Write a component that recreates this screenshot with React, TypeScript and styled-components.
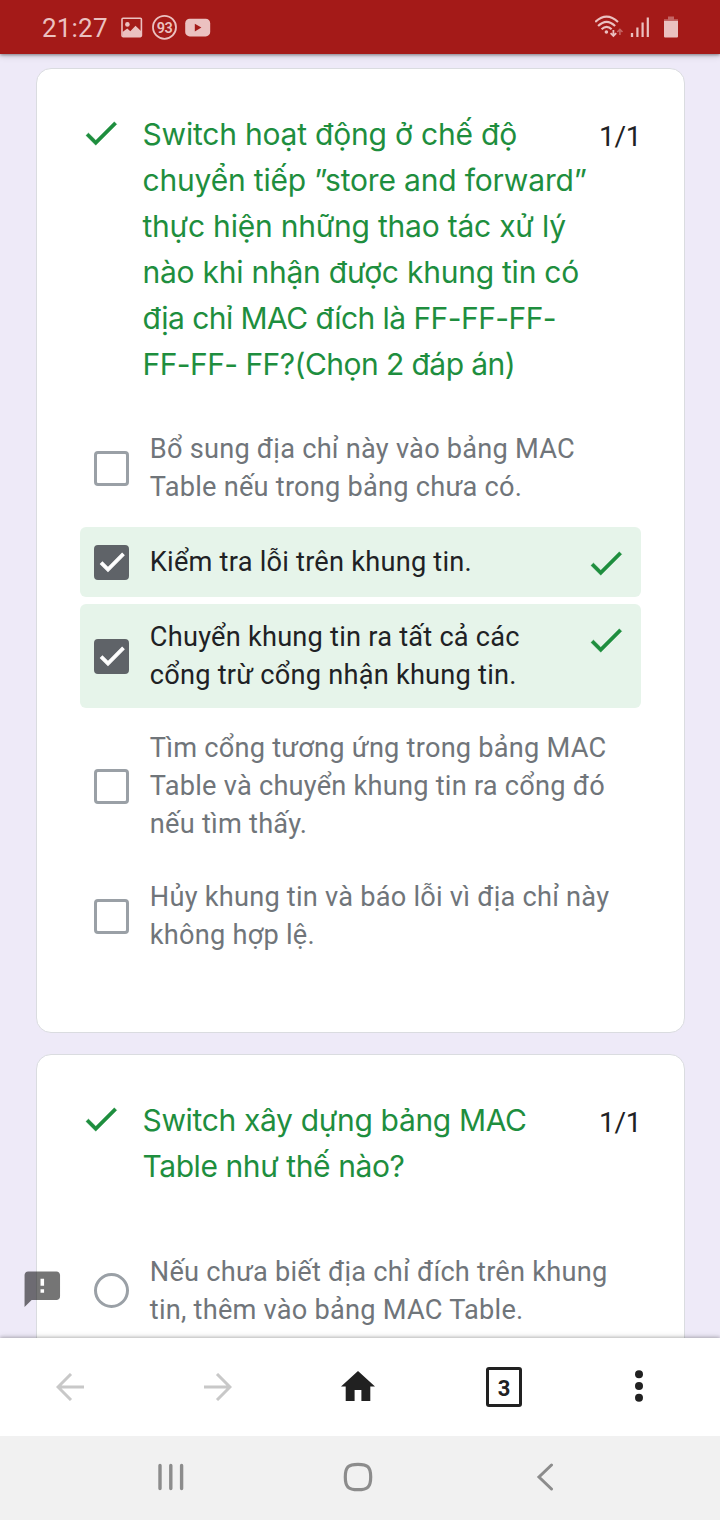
import React from "react";
import styled, { createGlobalStyle } from "styled-components";

const Global = createGlobalStyle`
  * { box-sizing: border-box; }
  body { margin: 0; background: #eeeaf8; font-family: Roboto, sans-serif; }
  svg { display: block; flex: none; }
`;

const Screen = styled.div`
  position: relative;
  display: flex;
  flex-direction: column;
  width: 720px;
  height: 1520px;
  overflow: hidden;
`;

const StatusBar = styled.header`
  position: relative;
  z-index: 2;
  display: flex;
  align-items: center;
  flex: none;
  height: 54px;
  padding: 0 41px 0 42px;
  background: #a41a18;
  color: #ebc1c0;
  box-shadow: 0 1px 3px rgba(0, 0, 0, 0.4), 0 2px 7px rgba(0, 0, 0, 0.14);
`;

const Clock = styled.time`
  width: 78.5px;
  font-size: 26px;
  line-height: 54px;
  letter-spacing: 0.2px;
  padding-top: 1px;
`;

const StatusGroup = styled.div<{ $end?: boolean }>`
  display: flex;
  align-items: center;
  margin-left: ${(p) => (p.$end ? "auto" : "0")};
`;

const Page = styled.main`
  flex: 1;
  min-height: 0;
  overflow: hidden;
  display: flex;
  flex-direction: column;
  gap: 21px;
  padding: 14px 35px 0 36px;
`;

const Card = styled.section<{ $height: number }>`
  flex: none;
  height: ${(p) => p.$height}px;
  padding: 42px 43px 0;
  background: #fff;
  border: 1px solid #dadce0;
  border-radius: 15px;
`;

const Question = styled.div<{ $gap: number }>`
  display: flex;
  align-items: flex-start;
  margin-bottom: ${(p) => p.$gap}px;
`;

const TitleMark = styled.div`
  width: 63px;
  margin-left: -0.5px;
  padding-top: 1px;
`;

const Title = styled.h2`
  flex: 1;
  margin: 0;
  font-family: Inter, sans-serif;
  font-weight: 400;
  font-size: 30px;
  line-height: 46px;
  color: #1e8e3e;
`;

const Line = styled.span<{ $spacing?: number }>`
  display: block;
  white-space: nowrap;
  letter-spacing: ${(p) => p.$spacing ?? 0}px;
`;

const Score = styled.div`
  flex: none;
  width: 42px;
  padding-top: 3px;
  font-size: 28px;
  line-height: 46px;
  letter-spacing: -0.3px;
  color: #202124;
`;

const Options = styled.div`
  display: flex;
  flex-direction: column;
  gap: 7px;
`;

const Option = styled.div<{ $correct?: boolean }>`
  display: flex;
  align-items: center;
  padding: 14px;
  border-radius: 6px;
  background: ${(p) => (p.$correct ? "#e6f4ea" : "transparent")};
  color: ${(p) => (p.$correct ? "#202124" : "#70757a")};
`;

const Box = styled.span<{ $checked?: boolean; $round?: boolean }>`
  display: flex;
  align-items: center;
  justify-content: center;
  flex: none;
  width: 35px;
  height: 35px;
  margin-right: 20.8px;
  border: 3px solid ${(p) => (p.$checked ? "#5f6368" : "#9aa0a6")};
  border-radius: ${(p) => (p.$round ? "50%" : "4px")};
  background: ${(p) => (p.$checked ? "#5f6368" : "transparent")};
`;

const OptionText = styled.div`
  flex: 1;
  font-size: 27.2px;
  line-height: 38px;
`;

const RowMark = styled.div`
  align-self: flex-start;
  height: 42px;
  padding-top: 0.8px;
`;

const Feedback = styled.div`
  position: absolute;
  left: 21px;
  top: 1268px;
  color: rgba(0, 0, 0, 0.54);
`;

const Toolbar = styled.nav`
  position: relative;
  z-index: 2;
  display: grid;
  grid-template-columns: 140px 156px 124px 168px 102px;
  flex: none;
  height: 98px;
  background: #fff;
  color: #212121;
  box-shadow: 0 -1px 3px rgba(0, 0, 0, 0.22), 0 -2px 6px rgba(0, 0, 0, 0.08);
`;

const ToolCell = styled.div<{ $faded?: boolean; $lift?: boolean }>`
  display: flex;
  align-items: center;
  justify-content: center;
  padding-bottom: ${(p) => (p.$lift ? 2 : 0)}px;
  color: ${(p) => (p.$faded ? "#c8c8c8" : "inherit")};
`;

const TabCount = styled.span`
  display: flex;
  align-items: center;
  justify-content: center;
  width: 36px;
  height: 40px;
  padding-top: 2px;
  border: 3px solid #212121;
  border-radius: 3px;
  font-size: 22px;
  font-weight: 700;
`;

const SystemNav = styled.nav`
  position: relative;
  z-index: 3;
  display: grid;
  grid-template-columns: 341px 33px 342px;
  justify-items: center;
  align-items: center;
  flex: none;
  height: 84px;
  padding-bottom: 3px;
  background: #f1f1f1;
  color: #8c8c8c;
`;

const Check = ({ size = 42, color = "#1e8e3e", bold = false }) => (
  <svg width={size} height={size} viewBox="0 0 24 24" fill={color} stroke={color} strokeWidth={bold ? 0.9 : 0.2}>
    <path d="M9 16.17L4.83 12l-1.42 1.41L9 19 21 7l-1.41-1.41z" />
  </svg>
);

type TextLine = [string, number?];
type Answer = { lines: TextLine[]; correct?: boolean; round?: boolean };

const firstTitle: TextLine[] = [
  ["Switch hoạt động ở chế độ", -0.2],
  ["chuyển tiếp ”store and forward”", -0.18],
  ["thực hiện những thao tác xử lý", -0.22],
  ["nào khi nhận được khung tin có", -0.24],
  ["địa chỉ MAC đích là FF-FF-FF-", -0.56],
  ["FF-FF- FF?(Chọn 2 đáp án)", -0.56],
];

const secondTitle: TextLine[] = [["Switch xây dựng bảng MAC", -0.34], ["Table như thế nào?", -0.42]];

const firstAnswers: Answer[] = [
  { lines: [["Bổ sung địa chỉ này vào bảng MAC"], ["Table nếu trong bảng chưa có."]] },
  { lines: [["Kiểm tra lỗi trên khung tin."]], correct: true },
  { lines: [["Chuyển khung tin ra tất cả các"], ["cổng trừ cổng nhận khung tin."]], correct: true },
  { lines: [["Tìm cổng tương ứng trong bảng MAC"], ["Table và chuyển khung tin ra cổng đó"], ["nếu tìm thấy."]] },
  { lines: [["Hủy khung tin và báo lỗi vì địa chỉ này"], ["không hợp lệ."]] },
];

const secondAnswers: Answer[] = [
  { lines: [["Nếu chưa biết địa chỉ đích trên khung"], ["tin, thêm vào bảng MAC Table."]], round: true },
];

const QuestionCard = ({ title, answers, gap, height }: { title: TextLine[]; answers: Answer[]; gap: number; height: number }) => (
  <Card $height={height}>
    <Question $gap={gap}>
      <TitleMark><Check /></TitleMark>
      <Title>
        {title.map(([text, spacing]) => <Line key={text} $spacing={spacing}>{text}</Line>)}
      </Title>
      <Score>1/1</Score>
    </Question>
    <Options>
      {answers.map((a) => (
        <Option key={a.lines[0][0]} $correct={a.correct}>
          <Box $checked={a.correct} $round={a.round}>
            {a.correct && <Check size={32} color="#fff" bold />}
          </Box>
          <OptionText>
            {a.lines.map(([text, spacing]) => <Line key={text} $spacing={spacing ?? 0.23}>{text}</Line>)}
          </OptionText>
          {a.correct && <RowMark><Check /></RowMark>}
        </Option>
      ))}
    </Options>
  </Card>
);

export default function App() {
  return (
    <>
      <Global />
      <Screen>
        <StatusBar>
          <Clock>21:27</Clock>
          <StatusGroup>
            <svg width="90" height="26" viewBox="0 0 90 26" fill="none">
              <rect x="1" y="4.2" width="19.4" height="18.4" rx="1" stroke="currentColor" strokeWidth="1.6" />
              <circle cx="6.4" cy="10.4" r="2.3" fill="currentColor" />
              <path d="M1.5 22V18L6.3 14.5L9.3 17.2L14.5 11.8L20 17V22Z" fill="currentColor" />
              <circle cx="43.5" cy="13.3" r="11.5" stroke="currentColor" strokeWidth="1.8" />
              <text x="43.5" y="18.6" textAnchor="middle" fontFamily="Roboto, sans-serif" fontWeight="600" fontSize="14.5" letterSpacing="-0.5" fill="currentColor">93</text>
              <rect x="64.2" y="4.8" width="25" height="17.6" rx="4.5" fill="currentColor" />
              <path d="M73.8 9.7V17.5L80.4 13.6Z" fill="#a41a18" />
            </svg>
          </StatusGroup>
          <StatusGroup $end>
            <svg width="84" height="26" viewBox="0 0 84 26" fill="none" stroke="currentColor">
              <g strokeWidth="2.2">
                <path d="M.2 8Q11.6-2.8 23 8" />
                <path d="M3.1 12Q11.6 3.6 20.1 12" />
                <path d="M6.6 15.3Q11.6 10.4 16.6 15.3" />
              </g>
              <circle cx="11.4" cy="18" r="1.8" fill="currentColor" stroke="none" />
              <path d="M18.4 16V22M15.6 19.2L18.4 22L21.2 19.2" strokeWidth="1.8" />
              <path d="M24.9 21V15.4M22.3 18L24.9 15.4L27.5 18" strokeWidth="1.6" opacity=".45" />
              <path d="M37 19V23" strokeWidth="2.3" />
              <path d="M42.4 13.5V23M47.6 8.5V23M52.8 3.5V23" strokeWidth="2.2" />
              <path d="M69 5.2H73V2.4H79V5.2H83V7H69Z" fill="currentColor" stroke="none" opacity=".45" />
              <path d="M69 7H83V22.5Q83 23.6 81.9 23.6H70.1Q69 23.6 69 22.5Z" fill="currentColor" stroke="none" />
            </svg>
          </StatusGroup>
        </StatusBar>

        <Page>
          <QuestionCard title={firstTitle} answers={firstAnswers} gap={29} height={965} />
          <QuestionCard title={secondTitle} answers={secondAnswers} gap={49.5} height={500} />
        </Page>

        <Feedback>
          <svg width="42.6" height="42.6" viewBox="0 0 24 24" fill="currentColor">
            <path d="M20 2H4c-1.1 0-1.99.9-1.99 2L2 22l4-4h14c1.1 0 2-.9 2-2V4c0-1.1-.9-2-2-2zm-7 12h-2v-2h2v2zm0-4h-2V6h2v4z" />
          </svg>
        </Feedback>

        <Toolbar>
          <ToolCell $faded>
            <svg width="28" height="28" viewBox="0 0 28 28" fill="none" stroke="currentColor" strokeWidth="3">
              <path d="M28 14H2M15 1L2 14L15 27" />
            </svg>
          </ToolCell>
          <ToolCell $faded>
            <svg width="28" height="28" viewBox="0 0 28 28" fill="none" stroke="currentColor" strokeWidth="3">
              <path d="M0 14H26M13 1L26 14L13 27" />
            </svg>
          </ToolCell>
          <ToolCell $lift>
            <svg width="34" height="30" viewBox="0 0 34 30" fill="currentColor">
              <path d="M17 0L34 15.4H29.3V30H20.4V19H13.6V30H4.7V15.4H0Z" />
            </svg>
          </ToolCell>
          <ToolCell><TabCount>3</TabCount></ToolCell>
          <ToolCell $lift>
            <svg width="8" height="32" viewBox="0 0 8 32" fill="currentColor">
              <circle cx="4" cy="4.3" r="4" /><circle cx="4" cy="16" r="4" /><circle cx="4" cy="27.7" r="4" />
            </svg>
          </ToolCell>
        </Toolbar>

        <SystemNav>
          <svg width="26" height="28" viewBox="0 0 26 28" stroke="currentColor" strokeWidth="3.4" strokeLinecap="round">
            <path d="M2 2.5V25.5M12.8 2.5V25.5M23.6 2.5V25.5" />
          </svg>
          <svg width="30" height="30" viewBox="0 0 30 30" fill="none" stroke="currentColor" strokeWidth="3.2">
            <path d="M15 2.3C24.8 2.3 27.7 5.2 27.7 15S24.8 27.7 15 27.7S2.3 24.8 2.3 15S5.2 2.3 15 2.3Z" />
          </svg>
          <svg width="18" height="28" viewBox="0 0 18 28" fill="none" stroke="currentColor" strokeWidth="3" strokeLinecap="round">
            <path d="M15.5 2L3 14L15.5 26" />
          </svg>
        </SystemNav>
      </Screen>
    </>
  );
}
